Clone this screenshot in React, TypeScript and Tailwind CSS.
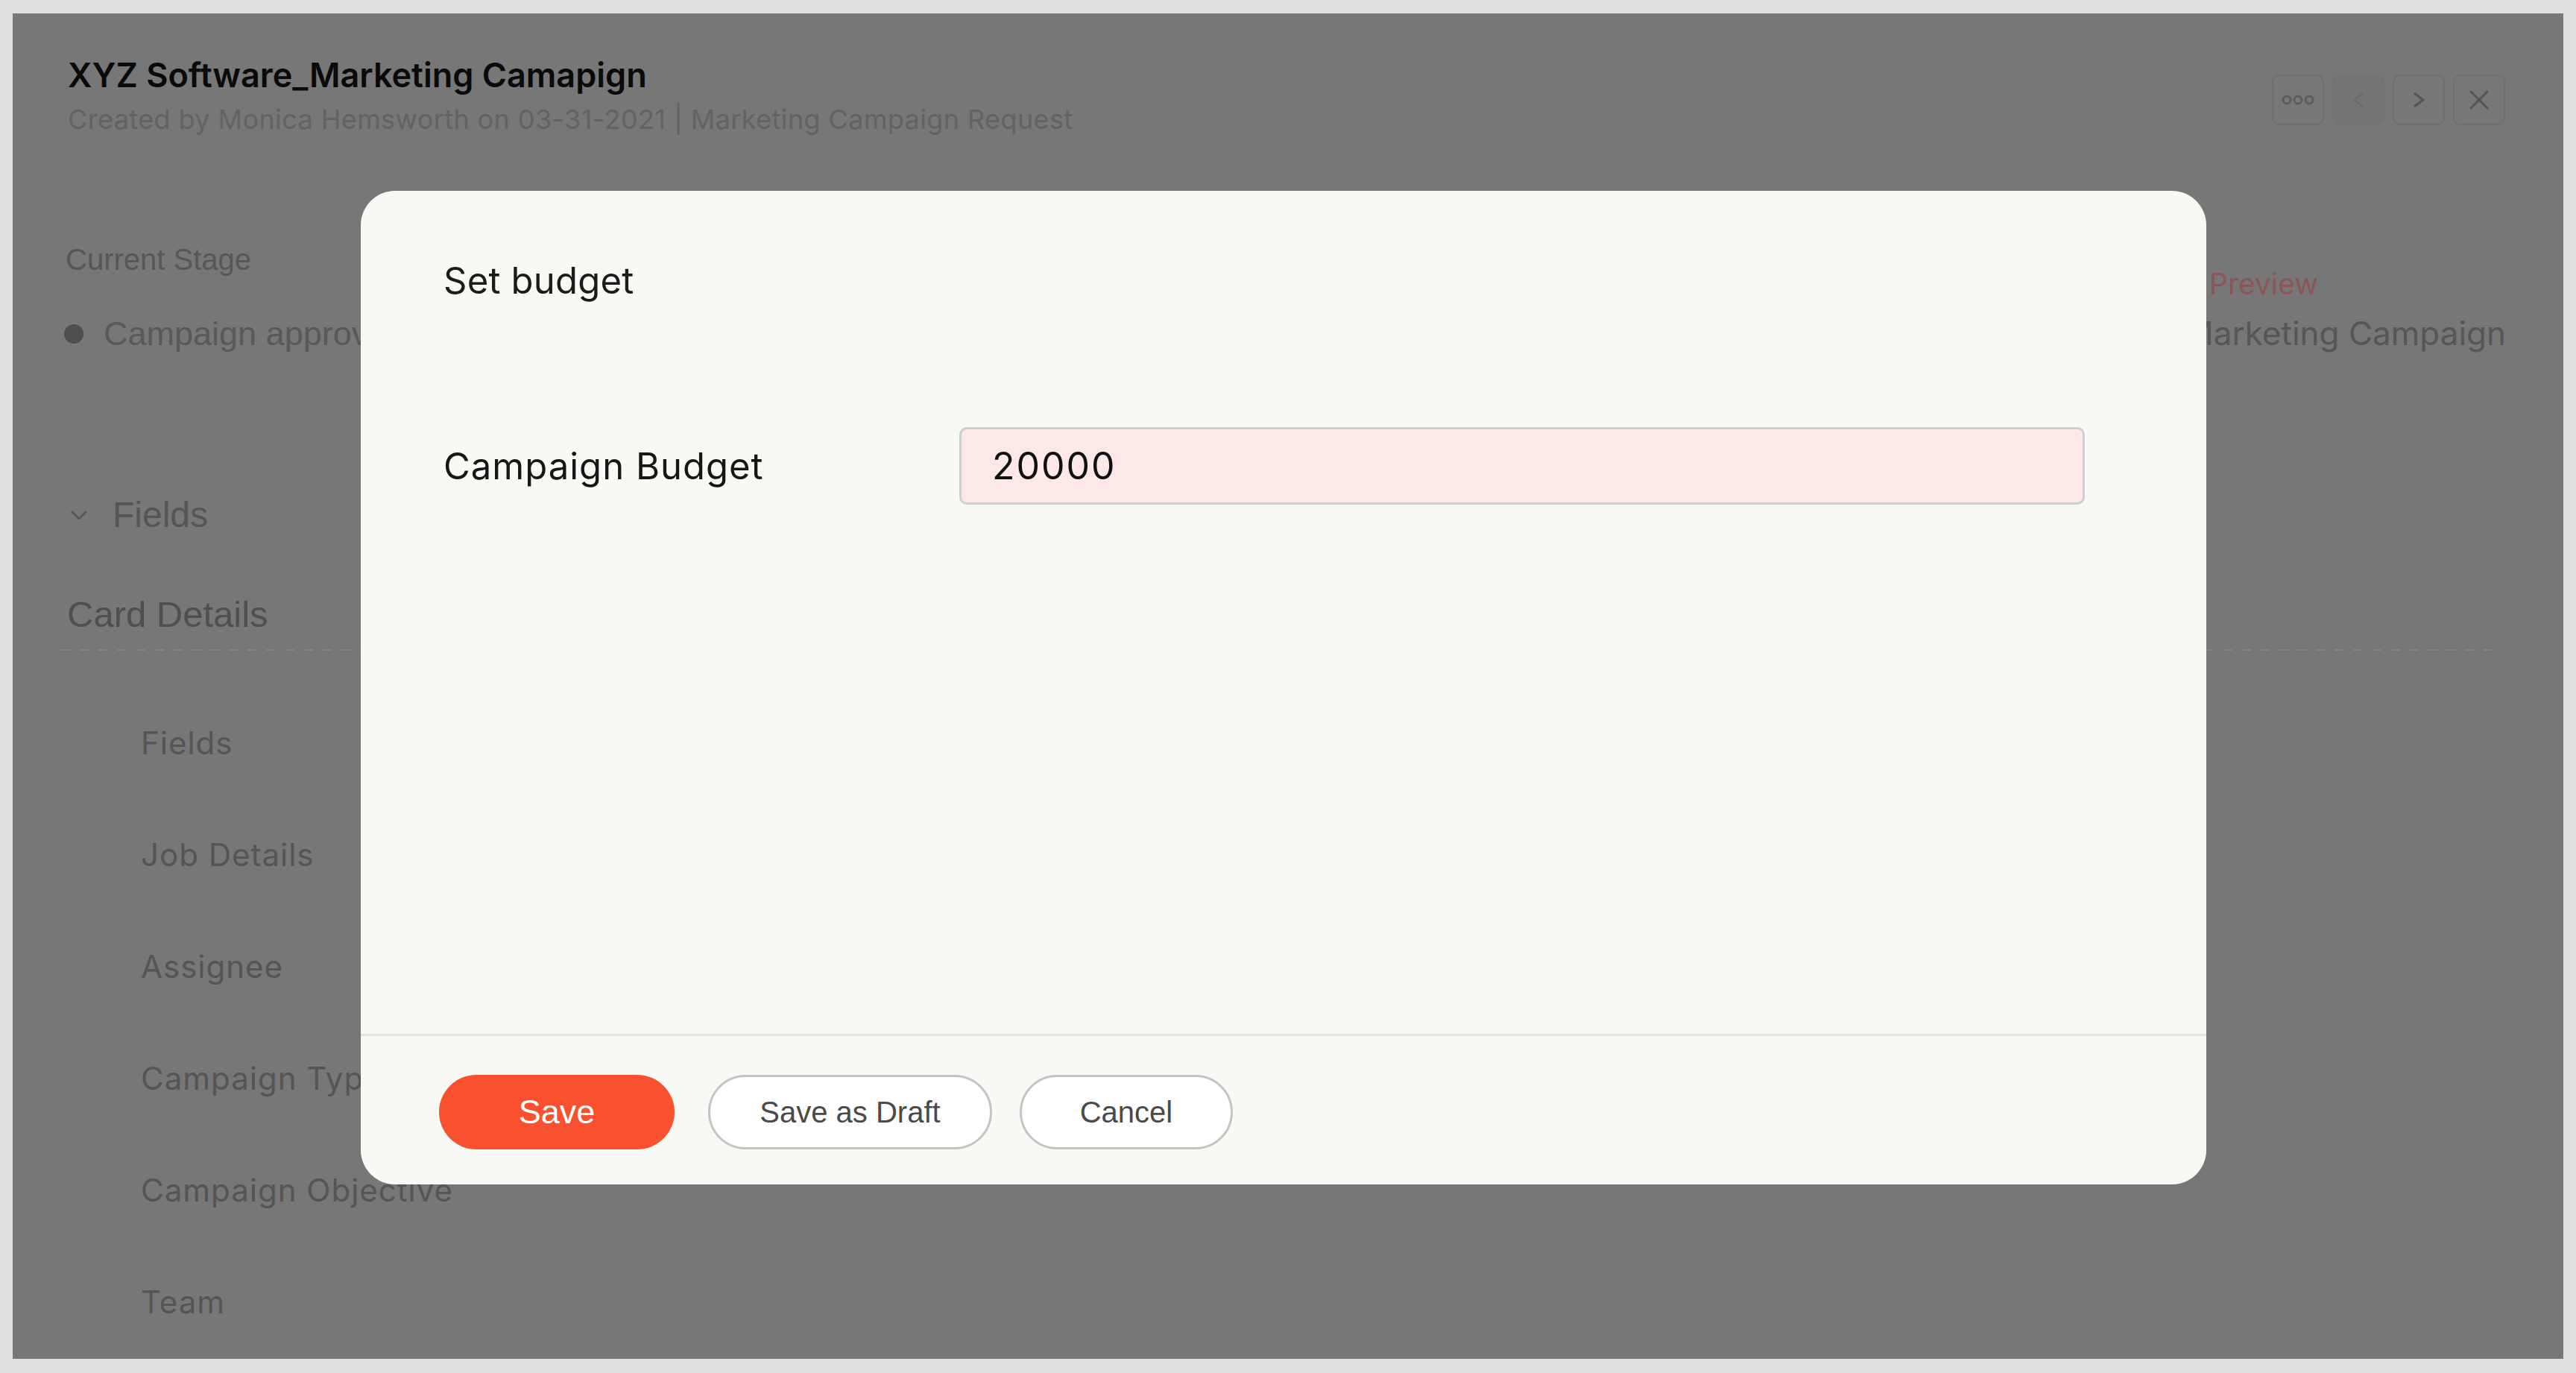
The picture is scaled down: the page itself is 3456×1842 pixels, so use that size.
import React from 'react'

const subItems = ['Fields', 'Job Details', 'Assignee', 'Campaign Type', 'Campaign Objective', 'Team']

function IconBox({ children, muted }: { children: React.ReactNode; muted?: boolean }) {
  return (
    <button
      className={
        muted
          ? 'flex h-[68px] w-[70px] items-center justify-center rounded-[10px] border-2 border-[#737373] bg-[#747474]'
          : 'flex h-[68px] w-[70px] items-center justify-center rounded-[10px] border-2 border-[#6f6f6f]'
      }
    >
      {children}
    </button>
  )
}

export default function App() {
  return (
    <div className="h-screen w-full bg-[#e0e0e0] px-[17px] pt-[18px] pb-[19px] font-[family-name:Liberation_Sans,Arial,sans-serif]">
      <div className="relative h-full w-full overflow-hidden bg-[#777777]">
        {/* record page behind the dialog */}
        <div className="flex h-full flex-col pl-[71px] pr-[78px] pt-[56px]">
          {/* Header */}
          <div className="flex items-start justify-between">
            <div className="pl-[3px]">
              <h1 className="font-[family-name:Inter,sans-serif] text-[45px] leading-[54px] font-semibold text-[#0a0a0a]">
                XYZ Software_Marketing Camapign
              </h1>
              <p className="mt-[11px] font-[family-name:Inter,sans-serif] text-[36px] leading-[43px] tracking-[0.4px] text-[#636363]">
                Created by Monica Hemsworth on 03-31-2021 | Marketing Campaign Request
              </p>
            </div>
            <div className="mt-[26px] flex gap-[11px]">
              <IconBox>
                <svg width="44" height="14" viewBox="0 0 44 14" fill="none" stroke="#5c5c5c" strokeWidth="3">
                  <circle cx="7" cy="7" r="5" />
                  <circle cx="22" cy="7" r="5" />
                  <circle cx="37" cy="7" r="5" />
                </svg>
              </IconBox>
              <IconBox muted>
                <svg width="16" height="20" viewBox="0 0 16 20" fill="none" stroke="#6b6b6b" strokeWidth="2.5">
                  <polyline points="14,1 2,10 14,19" />
                </svg>
              </IconBox>
              <IconBox>
                <svg width="16" height="20" viewBox="0 0 16 20" fill="none" stroke="#555555" strokeWidth="3">
                  <polyline points="2,1 14,10 2,19" />
                </svg>
              </IconBox>
              <IconBox>
                <svg width="28" height="26" viewBox="0 0 28 26" fill="none" stroke="#555555" strokeWidth="3">
                  <line x1="2" y1="1" x2="26" y2="25" />
                  <line x1="26" y1="1" x2="2" y2="25" />
                </svg>
              </IconBox>
            </div>
          </div>

          {/* Stage */}
          <div className="mt-[142px] flex items-start justify-between">
            <div>
              <div className="text-[40px] leading-[48px] text-[#575757]">Current Stage</div>
              <div className="mt-[49px] flex items-center">
                <span className="-ml-[2px] h-[26px] w-[26px] rounded-full bg-[#4f4f4f]" />
                <span className="ml-[27px] text-[45px] leading-[54px] text-[#595959]">Campaign approval</span>
              </div>
            </div>
            <div className="-mr-[4px] w-[435px] pt-[33px] font-[family-name:Inter,sans-serif]">
              <div className="pl-[34px] text-[39px] leading-[48px] text-[#8a5757]">Preview</div>
              <div className="mt-[16px] text-[44px] leading-[53px] text-[#565656] whitespace-nowrap">Marketing Campaign</div>
            </div>
          </div>

          {/* Fields */}
          <div className="mt-[187px] flex items-center">
            <svg className="ml-[7px]" width="22" height="12" viewBox="0 0 22 12" fill="none" stroke="#555555" strokeWidth="2.5">
              <polyline points="1,1 11,11 21,1" />
            </svg>
            <span className="ml-[34px] text-[48px] leading-[58px] text-[#555555]">Fields</span>
          </div>
          <div className="ml-[2px] mt-[75px] text-[49px] leading-[58px] text-[#4f4f4f]">Card Details</div>
          <div className="-ml-[6px] mr-[18px] mt-[18px] h-[2px] bg-[repeating-linear-gradient(90deg,#858585_0_13px,transparent_13px_25px)]" />

          <div className="mt-[99px] flex flex-col gap-[101px] pl-[101px] font-[family-name:Inter,sans-serif]">
            {subItems.map((item) => (
              <div key={item} className="text-[42px] leading-[49px] tracking-[1px] text-[#555555]">
                {item}
              </div>
            ))}
          </div>
        </div>

        {/* Dialog */}
        <div className="absolute inset-0 flex items-center justify-center pr-[12px] pt-[4px]">
          <div className="flex h-[1333px] w-[2476px] flex-col overflow-hidden rounded-[46px] bg-[#f8f8f4]">
            <div className="px-[111px] pt-[91px] font-[family-name:Inter,sans-serif]">
              <h2 className="text-[49px] leading-[59px] tracking-[0.2px] text-[#1b1b1b]">Set budget</h2>
              <div className="mt-[167px] flex items-center">
                <label className="w-[692px] text-[49px] leading-[59px] tracking-[1px] text-[#161616]">Campaign Budget</label>
                <input
                  readOnly
                  value="20000"
                  className="h-[104px] w-[1510px] rounded-[10px] border-[3px] border-[#cfcfcf] bg-[#fde8e8] pl-[41px] font-[family-name:Inter,sans-serif] text-[50px] tracking-[2px] text-[#111111] outline-none"
                />
              </div>
            </div>
            <div className="flex-1" />
            <div className="flex h-[202px] items-center border-t-[3px] border-[#e3e3e3] pl-[105px] pt-[5px]">
              <button className="h-[100px] w-[316px] rounded-full bg-[#f9512f] text-[45px] text-white">Save</button>
              <button className="ml-[45px] h-[100px] w-[381px] rounded-full border-[3px] border-[#c4c4c4] bg-white text-[40px] text-[#4a4a4a]">
                Save as Draft
              </button>
              <button className="ml-[37px] h-[100px] w-[286px] rounded-full border-[3px] border-[#c4c4c4] bg-white text-[40px] text-[#4a4a4a]">
                Cancel
              </button>
            </div>
          </div>
        </div>
      </div>
    </div>
  )
}
